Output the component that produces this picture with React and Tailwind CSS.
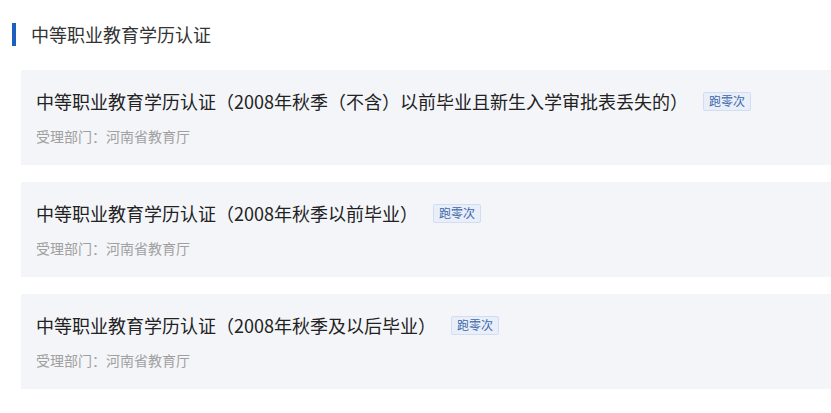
const items = [
  '中等职业教育学历认证（2008年秋季（不含）以前毕业且新生入学审批表丢失的）',
  '中等职业教育学历认证（2008年秋季以前毕业）',
  '中等职业教育学历认证（2008年秋季及以后毕业）',
];

export default function App() {
  return (
    <div
      className="min-h-screen bg-white pt-[22px]"
      style={{ fontFamily: '"Noto Sans CJK SC", "Noto Sans", sans-serif' }}
    >
      {/* Section title */}
      <div className="flex items-center pl-[12px]">
        <div className="w-[4px] h-[23px] bg-[#1d5fbf]" />
        <h2 className="ml-[15px] text-[18px] leading-[24px] text-[#333]">中等职业教育学历认证</h2>
      </div>

      {/* Cards */}
      <div className="mt-[24px] pl-[21px] flex flex-col gap-[17px]">
        {items.map((title) => (
          <div key={title} className="bg-[#f4f5f9] pl-[15px] pt-[19px] pb-[19px]">
            <div className="flex items-center">
              <span className="text-[18px] leading-[24px] text-[#222] whitespace-nowrap">{title}</span>
              <span className="ml-[15px] px-[5px] h-[19px] flex items-center text-[12px] text-[#3d66a8] bg-[#e9effa] border border-[#d3ddef] rounded-[2px]">
                跑零次
              </span>
            </div>
            <div className="mt-[13px] text-[14px] leading-[20px] text-[#a0a0a0]">受理部门：河南省教育厅</div>
          </div>
        ))}
      </div>
    </div>
  );
}
